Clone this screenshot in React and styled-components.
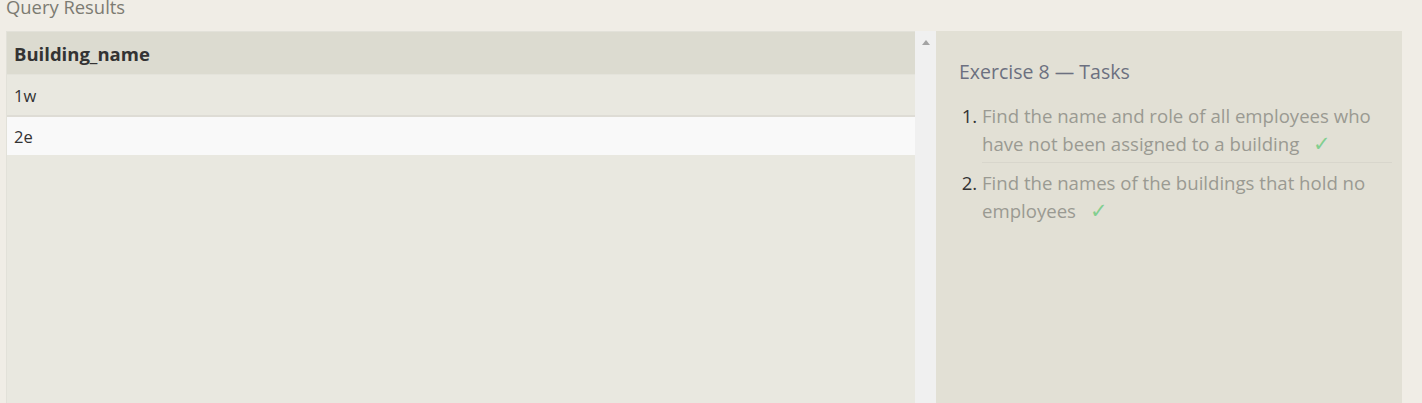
import React from "react";
import styled, { createGlobalStyle } from "styled-components";

const GlobalStyle = createGlobalStyle`
    html, body {
        margin: 0;
        padding: 0;
        background-color: #f0ede6;
        font-family: "Open Sans", "Noto Sans", sans-serif;
        overflow: hidden;
    }
`;

const Page = styled.div`
    height: 403px;
    padding: 0 20px 0 6px;
    display: flex;
    flex-direction: column;
`;

const Title = styled.div`
    font-size: 18.4px;
    line-height: 20px;
    margin-top: -3px;
    height: 34px;
    color: #7c7b72;
`;

const Body = styled.div`
    flex: 1;
    display: flex;
    min-height: 0;
`;

const TableArea = styled.div`
    width: 909px;
    background-color: #e9e8e0;
    border-top: 1px solid #e2e1d9;
    border-left: 1px solid #e2e1d9;
    box-sizing: border-box;
`;

const Table = styled.table`
    width: 100%;
    border-collapse: collapse;
`;

const HeadCell = styled.th`
    text-align: left;
    height: 42px;
    padding: 0 7px;
    background-color: #dcdbd0;
    font-size: 18.5px;
    font-weight: 700;
    color: #333;
    border-bottom: 1px solid #e4e3db;
`;

const Cell = styled.td`
    height: ${(p) => (p.$odd ? "40px" : "38px")};
    padding: 0 7px;
    font-size: 16.5px;
    color: #333;
    background-color: ${(p) => (p.$odd ? "#e9e8e0" : "#f9f9f9")};
    border-bottom: ${(p) => (p.$odd ? "2px solid #dedcd5" : "none")};
`;

const Scrollbar = styled.div`
    width: 21px;
    background-color: #f0f0f0;
    display: flex;
    justify-content: center;
    padding-top: 9px;
    box-sizing: border-box;
`;

const Arrow = styled.div`
    width: 0;
    height: 0;
    border-left: 4px solid transparent;
    border-right: 4px solid transparent;
    border-bottom: 5px solid #a3a3a3;
`;

const TaskPanel = styled.div`
    width: 466px;
    background-color: #e2e0d5;
    padding: 29px 10px 0 23px;
    box-sizing: border-box;
`;

const TaskHeading = styled.div`
    font-size: 19.5px;
    color: #6c7080;
    line-height: 24px;
    margin-bottom: 18px;
`;

const TaskList = styled.ol`
    margin: 0;
    padding-left: 23px;
`;

const TaskItem = styled.li`
    font-size: 18.6px;
    line-height: 28px;
    color: #9a9a92;
    padding-bottom: ${(p) => (p.$last ? "0" : "4px")};
    margin-bottom: ${(p) => (p.$last ? "0" : "6px")};
    border-bottom: ${(p) => (p.$last ? "none" : "1px solid #d8d6cc")};

    &::marker {
        color: #333;
    }
`;

const Check = styled.span`
    color: #82cf90;
    margin-left: 14px;
    font-family: "DejaVu Sans", sans-serif;
    font-size: 21px;
    line-height: 20px;
    font-weight: 300;
`;

const rows = ["1w", "2e"];

const tasks = [
    "Find the name and role of all employees who have not been assigned to a building",
    "Find the names of the buildings that hold no employees",
];

export default function App() {
    return (
        <>
            <GlobalStyle />
            <Page>
                <Title>Query Results</Title>
                <Body>
                    <TableArea>
                        <Table>
                            <thead>
                                <tr>
                                    <HeadCell>Building_name</HeadCell>
                                </tr>
                            </thead>
                            <tbody>
                                {rows.map((r, i) => (
                                    <tr key={r}>
                                        <Cell $odd={i % 2 === 0}>{r}</Cell>
                                    </tr>
                                ))}
                            </tbody>
                        </Table>
                    </TableArea>
                    <Scrollbar>
                        <Arrow />
                    </Scrollbar>
                    <TaskPanel>
                        <TaskHeading>Exercise 8 — Tasks</TaskHeading>
                        <TaskList>
                            {tasks.map((t, i) => (
                                <TaskItem key={i} $last={i === tasks.length - 1}>
                                    {t}
                                    <Check>✓</Check>
                                </TaskItem>
                            ))}
                        </TaskList>
                    </TaskPanel>
                </Body>
            </Page>
        </>
    );
}
